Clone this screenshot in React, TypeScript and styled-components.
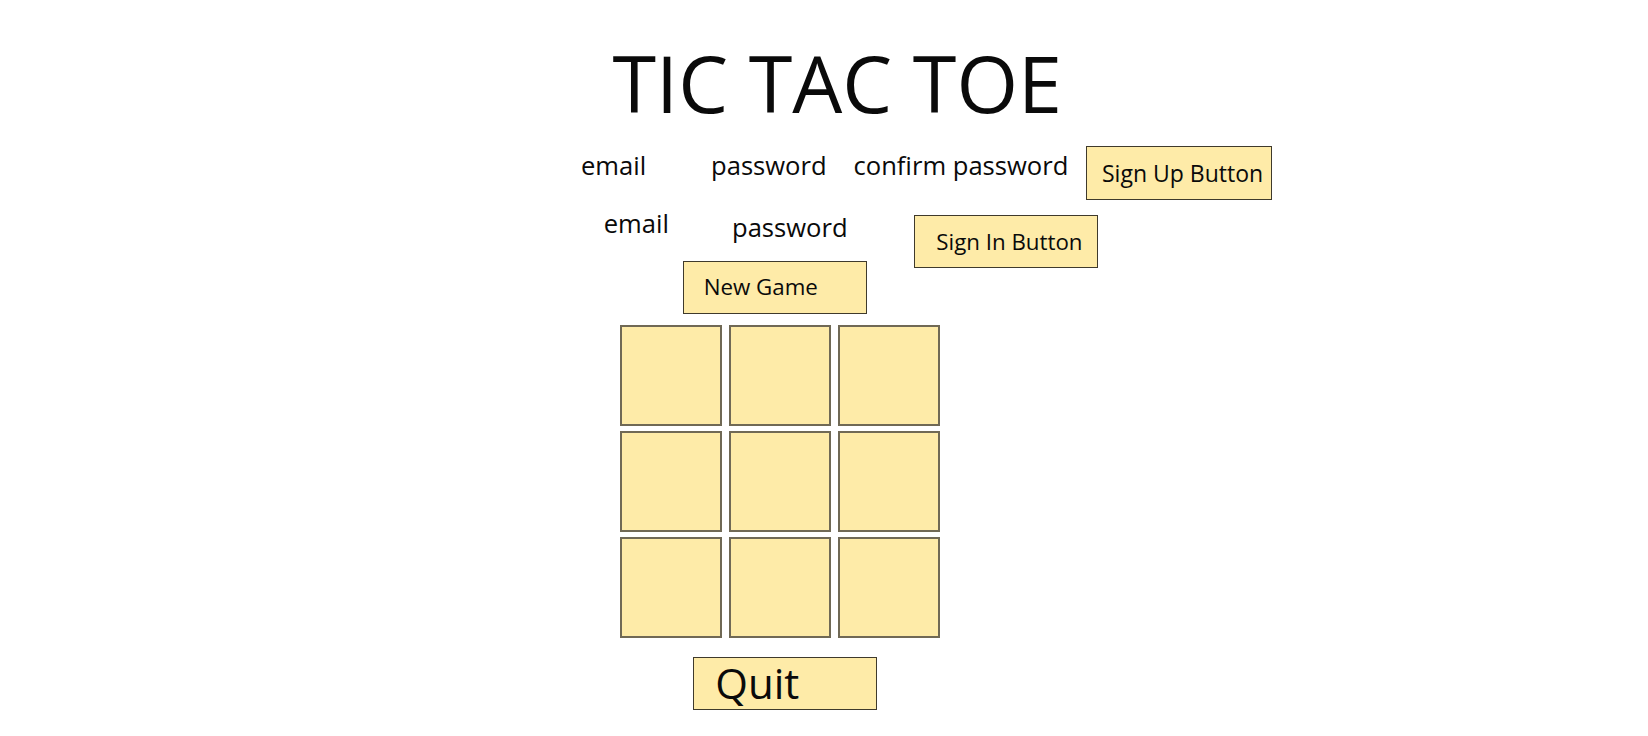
import React from "react";
import styled, { createGlobalStyle } from "styled-components";

const GlobalStyle = createGlobalStyle`
  html, body {
    margin: 0;
    padding: 0;
    background: #ffffff;
  }
  body {
    font-family: "Open Sans", "Noto Sans", Arial, sans-serif;
    color: #0a0a0a;
  }
  * { box-sizing: border-box; }
`;

const Page = styled.main`
  width: 1648px;
  min-height: 736px;
  display: flex;
  flex-direction: column;
  align-items: flex-start;
`;

const Title = styled.h1`
  margin: 43px 0 0 612.5px;
  font-size: 79.2px;
  line-height: 79px;
  font-weight: 400;
  white-space: nowrap;
`;

const SignUpRow = styled.section`
  margin-top: 24px;
  padding-left: 581px;
  display: grid;
  grid-template-columns: 130px 142.5px 232.5px auto;
  align-items: start;
`;

const SignInRow = styled.section`
  margin-top: 7px;
  padding-left: 603.7px;
  display: grid;
  grid-template-columns: 310.6px auto;
  align-items: start;
`;

const Stack = styled.div`
  display: flex;
  flex-direction: column;
  align-items: flex-start;
`;

const Fields = styled.div`
  display: grid;
  grid-template-columns: 128.3px auto;
  align-items: start;
`;

const Label = styled.span<{ $offset?: number }>`
  margin-top: ${(p) => p.$offset ?? 0}px;
  font-size: 25.6px;
  line-height: 34px;
  white-space: nowrap;
`;

const NoteButton = styled.button<{
  $w: number;
  $h: number;
  $pad: number;
  $size: number;
  $mt?: number;
  $ml?: number;
}>`
  width: ${(p) => p.$w}px;
  height: ${(p) => p.$h}px;
  margin: ${(p) => p.$mt ?? 0}px 0 0 ${(p) => p.$ml ?? 0}px;
  padding: 0 0 0 ${(p) => p.$pad}px;
  display: flex;
  align-items: center;
  justify-content: flex-start;
  background: #feeba8;
  border: 1.5px solid #3f3a2c;
  border-radius: 0;
  font-family: "Open Sans", "Noto Sans", Arial, sans-serif;
  font-size: ${(p) => p.$size}px;
  line-height: 1;
  color: #0a0a0a;
  white-space: nowrap;
  cursor: pointer;
`;

const Board = styled.div`
  margin: 11px 0 0 620px;
  display: grid;
  grid-template-columns: repeat(3, 102px);
  grid-auto-rows: 101.5px;
  column-gap: 7px;
  row-gap: 4.5px;
`;

const Cell = styled.button`
  width: 102px;
  height: 101.5px;
  padding: 0;
  background: #feeba8;
  border: 2px solid #706955;
  border-radius: 0;
  cursor: pointer;
`;

export default function App() {
  const cells = Array.from({ length: 9 }, (_, i) => i);
  return (
    <>
      <GlobalStyle />
      <Page>
        <Title>TIC TAC TOE</Title>

        <SignUpRow>
          <Label $offset={3}>email</Label>
          <Label $offset={3}>password</Label>
          <Label $offset={3}>confirm password</Label>
          <NoteButton $w={186} $h={54} $pad={15} $size={23} $mt={0}>
            Sign Up Button
          </NoteButton>
        </SignUpRow>

        <SignInRow>
          <Stack>
            <Fields>
              <Label>email</Label>
              <Label $offset={4}>password</Label>
            </Fields>
            <NoteButton $w={184} $h={53} $pad={20} $size={22.3} $mt={15.7} $ml={79}>
              New Game
            </NoteButton>
          </Stack>
          <NoteButton $w={183.4} $h={53.3} $pad={21} $size={22.3} $mt={8}>
            Sign In Button
          </NoteButton>
        </SignInRow>

        <Board>
          {cells.map((i) => (
            <Cell key={i} aria-label={`cell ${i + 1}`} />
          ))}
        </Board>

        <NoteButton $w={184} $h={53.4} $pad={21} $size={42} $mt={18.5} $ml={693.3}>
          Quit
        </NoteButton>
      </Page>
    </>
  );
}
